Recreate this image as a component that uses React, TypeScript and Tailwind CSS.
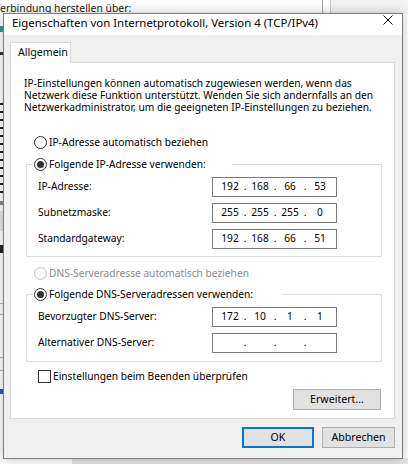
import React from "react"

const ui = "font-['Noto_Sans',sans-serif]"

function Radio({
  label,
  checked = false,
  disabled = false,
}: {
  label: string
  checked?: boolean
  disabled?: boolean
}) {
  return (
    <div className="flex h-[13px] items-center">
      <span
        className={`flex h-[13px] w-[13px] shrink-0 items-center justify-center rounded-full border ${
          disabled ? "border-[#c4c4c4] bg-[#fbfbfb]" : "border-[#333333] bg-white"
        }`}
      >
        {checked && <span className="h-[7px] w-[7px] rounded-full bg-[#333333]" />}
      </span>
      <span
        className={`ml-[2px] whitespace-nowrap leading-[13px] ${
          disabled ? "text-[#8a8a8a]" : "text-black"
        }`}
      >
        {label}
      </span>
    </div>
  )
}

function IpBox({ value }: { value: string[] }) {
  return (
    <div className="flex h-[20px] w-[125px] items-center border border-[#7a7a7a] bg-white pl-[2px]">
      {value.map((part, i) => (
        <React.Fragment key={i}>
          {i > 0 && <span className="flex w-0 justify-center">.</span>}
          <span className="w-[30px] text-center">{part}</span>
        </React.Fragment>
      ))}
    </div>
  )
}

function IpRow({ label, value }: { label: string; value: string[] }) {
  return (
    <div className="flex h-[20px] items-center">
      <span className="w-[174px] whitespace-nowrap">{label}</span>
      <IpBox value={value} />
    </div>
  )
}

function Group({
  title,
  gap,
  children,
}: {
  title: string
  gap: string
  children: React.ReactNode
}) {
  return (
    <fieldset className="ml-[15px] mr-[12px] border border-[#dcdcdc]">
      <legend className={`ml-[6px] pl-[1px] ${gap}`}>
        <Radio label={title} checked />
      </legend>
      {children}
    </fieldset>
  )
}

function Button({
  label,
  width,
  primary = false,
}: {
  label: string
  width: string
  primary?: boolean
}) {
  return (
    <button
      className={`flex h-[21px] items-center justify-center bg-[#e1e1e1] text-[10.6px] leading-none ${width} ${
        primary ? "border-2 border-[#0078d7]" : "border border-[#adadad]"
      }`}
    >
      {label}
    </button>
  )
}

export default function App() {
  return (
    <div className={`relative h-[464px] w-[408px] overflow-hidden bg-white text-[10.2px] text-black ${ui}`}>
      {/* window behind the dialog */}
      <div className="absolute left-[-6px] top-[1px] whitespace-nowrap text-[10.4px] leading-[14px] text-[#1a1a1a]">
        Verbindung herstellen über:
      </div>
      <div className="absolute left-[322px] top-0 h-[14px] w-px bg-[#a0a0a0]" />
      <div className="absolute left-[330px] top-0 h-[14px] w-px bg-[#c8c8c8]" />
      <div className="absolute left-[331px] top-0 h-[14px] w-[77px] bg-[#f3f3f3]" />
      <div className="absolute left-0 top-[26px] flex w-[3px] flex-col">
        <span className="h-[6px] w-[3px] bg-[#3a9a8a]" />
        <span className="mt-[20px] h-[3px] w-[3px] bg-[#333]" />
        <span className="mt-[48px] flex flex-col gap-[6px]">
          {Array.from({ length: 12 }).map((_, i) => (
            <span key={i} className="h-[2px] w-[3px] bg-[#222]" />
          ))}
        </span>
        <span className="mt-[8px] h-[4px] w-[3px] bg-[#888]" />
        <span className="mt-[6px] h-[20px] w-[3px] bg-[#e6e6e6]" />
        <span className="mt-[14px] h-[8px] w-[3px] bg-[#222]" />
        <span className="mt-[50px] h-px w-[3px] bg-[#bbb]" />
        <span className="mt-[10px] h-px w-[3px] bg-[#bbb]" />
        <span className="mt-[42px] h-px w-[3px] bg-[#bbb]" />
        <span className="mt-[12px] h-px w-[3px] bg-[#bbb]" />
        <span className="mt-[18px] h-[5px] w-[3px] bg-[#2a5bb8]" />
      </div>
      <div className="absolute bottom-0 left-[72px] h-[6px] w-[336px] bg-[#e4e4e4]" />

      {/* dialog */}
      <div className="absolute left-[3px] top-[13px] flex h-[446px] w-[400px] flex-col border border-[#7d7d7d] bg-[#f0f0f0] shadow-[0_0_10px_rgba(0,0,0,0.25)]">
        <div className="flex h-[21px] shrink-0 items-start bg-white">
          <span className="ml-[8px] mt-[1px] whitespace-nowrap text-[11.4px] leading-[16px]">
            Eigenschaften von Internetprotokoll, Version 4 (TCP/IPv4)
          </span>
          <svg className="ml-auto mr-[9px] mt-[1px]" width="10" height="10" viewBox="0 0 10 10">
            <path d="M0.5 0.5 L9.5 9.5 M9.5 0.5 L0.5 9.5" stroke="#000" strokeWidth="1" fill="none" />
          </svg>
        </div>

        <div className="flex flex-1 flex-col pl-[6px] pr-[7px] pt-[7px]">
          <div className="relative z-10 flex h-[21px] w-[61px] items-center border border-b-0 border-[#d9d9d9] bg-white pl-[7px] text-[10.6px]">
            Allgemein
          </div>
          <div className="-mt-px flex flex-col border border-[#d9d9d9] bg-white pb-[8px] pt-[14px]">
            <p className="whitespace-nowrap pl-[13px] leading-[12px]">
              IP-Einstellungen können automatisch zugewiesen werden, wenn das
              <br />
              Netzwerk diese Funktion unterstützt. Wenden Sie sich andernfalls an den
              <br />
              Netzwerkadministrator, um die geeigneten IP-Einstellungen zu beziehen.
            </p>

            <div className="ml-[23px] mt-[23px]">
              <Radio label="IP-Adresse automatisch beziehen" />
            </div>

            <div className="mt-[9px]">
              <Group title="Folgende IP-Adresse verwenden:" gap="pr-[26px]">
                <div className="flex flex-col gap-[6px] pb-[7px] pl-[11px] pt-[6px]">
                  <IpRow label="IP-Adresse:" value={["192", "168", "66", "53"]} />
                  <IpRow label="Subnetzmaske:" value={["255", "255", "255", "0"]} />
                  <IpRow label="Standardgateway:" value={["192", "168", "66", "51"]} />
                </div>
              </Group>
            </div>

            <div className="ml-[23px] mt-[10px]">
              <Radio label="DNS-Serveradresse automatisch beziehen" disabled />
            </div>

            <div className="mt-[8px]">
              <Group title="Folgende DNS-Serveradressen verwenden:" gap="pr-[29px]">
                <div className="flex flex-col gap-[6px] pb-[8px] pl-[11px] pt-[6px]">
                  <IpRow label="Bevorzugter DNS-Server:" value={["172", "10", "1", "1"]} />
                  <IpRow label="Alternativer DNS-Server:" value={["", "", "", ""]} />
                </div>
              </Group>
            </div>

            <div className="ml-[27px] mt-[8px] flex h-[13px] items-center">
              <span className="h-[13px] w-[13px] border border-[#333333] bg-white" />
              <span className="ml-[2px] leading-[13px]">Einstellungen beim Beenden überprüfen</span>
            </div>

            <div className="mr-[13px] mt-[6px] flex justify-end">
              <Button label="Erweitert..." width="w-[88px]" />
            </div>
          </div>

          <div className="mt-[8px] flex justify-end gap-[8px]">
            <Button label="OK" width="w-[72px]" primary />
            <Button label="Abbrechen" width="w-[73px]" />
          </div>
        </div>
      </div>
    </div>
  )
}
